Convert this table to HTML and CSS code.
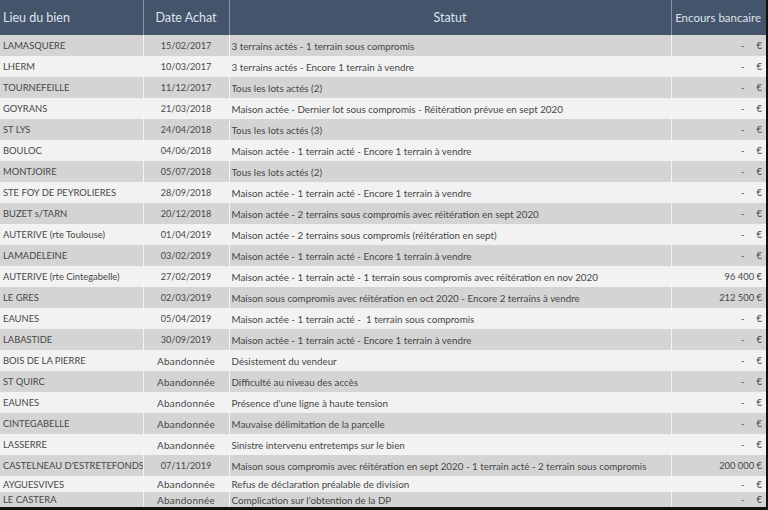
FILE: index.html
```html
<!DOCTYPE html>
<html lang="fr">
<head>
<meta charset="utf-8">
<link rel="stylesheet" href="styles.css">
</head>
<body>
<div class="frame">
<table class="grid">
<colgroup>
<col class="c-lieu"><col class="c-date"><col class="c-statut"><col class="c-enc">
</colgroup>
<thead>
<tr><th class="lieu">Lieu du bien</th><th class="date">Date Achat</th><th class="statut">Statut</th><th class="enc">Encours bancaire</th></tr>
</thead>
<tbody>
<tr><td class="lieu">LAMASQUERE</td><td class="date">15/02/2017</td><td class="statut">3 terrains actés - 1 terrain sous compromis</td><td class="enc"><span class="dash">-</span><span class="eur">€</span></td></tr>
<tr><td class="lieu">LHERM</td><td class="date">10/03/2017</td><td class="statut">3 terrains actés - Encore 1 terrain à vendre</td><td class="enc"><span class="dash">-</span><span class="eur">€</span></td></tr>
<tr><td class="lieu">TOURNEFEILLE</td><td class="date">11/12/2017</td><td class="statut">Tous les lots actés (2)</td><td class="enc"><span class="dash">-</span><span class="eur">€</span></td></tr>
<tr><td class="lieu">GOYRANS</td><td class="date">21/03/2018</td><td class="statut">Maison actée - Dernier lot sous compromis - Réitération prévue en sept 2020</td><td class="enc"><span class="dash">-</span><span class="eur">€</span></td></tr>
<tr><td class="lieu">ST LYS</td><td class="date">24/04/2018</td><td class="statut">Tous les lots actés (3)</td><td class="enc"><span class="dash">-</span><span class="eur">€</span></td></tr>
<tr><td class="lieu">BOULOC</td><td class="date">04/06/2018</td><td class="statut">Maison actée - 1 terrain acté - Encore 1 terrain à vendre</td><td class="enc"><span class="dash">-</span><span class="eur">€</span></td></tr>
<tr><td class="lieu">MONTJOIRE</td><td class="date">05/07/2018</td><td class="statut">Tous les lots actés (2)</td><td class="enc"><span class="dash">-</span><span class="eur">€</span></td></tr>
<tr><td class="lieu">STE FOY DE PEYROLIERES</td><td class="date">28/09/2018</td><td class="statut">Maison actée - 1 terrain acté - Encore 1 terrain à vendre</td><td class="enc"><span class="dash">-</span><span class="eur">€</span></td></tr>
<tr><td class="lieu">BUZET s/TARN</td><td class="date">20/12/2018</td><td class="statut">Maison actée - 2 terrains sous compromis avec réitération en sept 2020</td><td class="enc"><span class="dash">-</span><span class="eur">€</span></td></tr>
<tr><td class="lieu">AUTERIVE (rte Toulouse)</td><td class="date">01/04/2019</td><td class="statut">Maison actée - 2 terrains sous compromis (réitération en sept)</td><td class="enc"><span class="dash">-</span><span class="eur">€</span></td></tr>
<tr><td class="lieu">LAMADELEINE</td><td class="date">03/02/2019</td><td class="statut">Maison actée - 1 terrain acté - Encore 1 terrain à vendre</td><td class="enc"><span class="dash">-</span><span class="eur">€</span></td></tr>
<tr><td class="lieu">AUTERIVE (rte Cintegabelle)</td><td class="date">27/02/2019</td><td class="statut">Maison actée - 1 terrain acté - 1 terrain sous compromis avec réitération en nov 2020</td><td class="enc">96 400 €</td></tr>
<tr><td class="lieu">LE GRES</td><td class="date">02/03/2019</td><td class="statut">Maison sous compromis avec réitération en oct 2020 - Encore 2 terrains à vendre</td><td class="enc">212 500 €</td></tr>
<tr><td class="lieu">EAUNES</td><td class="date">05/04/2019</td><td class="statut">Maison actée - 1 terrain acté -&nbsp; 1 terrain sous compromis</td><td class="enc"><span class="dash">-</span><span class="eur">€</span></td></tr>
<tr><td class="lieu">LABASTIDE</td><td class="date">30/09/2019</td><td class="statut">Maison actée - 1 terrain acté - Encore 1 terrain à vendre</td><td class="enc"><span class="dash">-</span><span class="eur">€</span></td></tr>
<tr><td class="lieu">BOIS DE LA PIERRE</td><td class="date aband">Abandonnée</td><td class="statut">Désistement du vendeur</td><td class="enc"><span class="dash">-</span><span class="eur">€</span></td></tr>
<tr><td class="lieu">ST QUIRC</td><td class="date aband">Abandonnée</td><td class="statut">Difficulté au niveau des accès</td><td class="enc"><span class="dash">-</span><span class="eur">€</span></td></tr>
<tr><td class="lieu">EAUNES</td><td class="date aband">Abandonnée</td><td class="statut">Présence d'une ligne à haute tension</td><td class="enc"><span class="dash">-</span><span class="eur">€</span></td></tr>
<tr><td class="lieu">CINTEGABELLE</td><td class="date aband">Abandonnée</td><td class="statut">Mauvaise délimitation de la parcelle</td><td class="enc"><span class="dash">-</span><span class="eur">€</span></td></tr>
<tr><td class="lieu">LASSERRE</td><td class="date aband">Abandonnée</td><td class="statut">Sinistre intervenu entretemps sur le bien</td><td class="enc"><span class="dash">-</span><span class="eur">€</span></td></tr>
<tr><td class="lieu">CASTELNEAU D'ESTRETEFONDS</td><td class="date">07/11/2019</td><td class="statut">Maison sous compromis avec réitération en sept 2020 - 1 terrain acté - 2 terrain sous compromis</td><td class="enc">200 000 €</td></tr>
<tr class="short"><td class="lieu">AYGUESVIVES</td><td class="date aband">Abandonnée</td><td class="statut">Refus de déclaration préalable de division</td><td class="enc"><span class="dash">-</span><span class="eur">€</span></td></tr>
<tr class="short last"><td class="lieu">LE CASTERA</td><td class="date aband">Abandonnée</td><td class="statut">Complication sur l'obtention de la DP</td><td class="enc"><span class="dash">-</span><span class="eur">€</span></td></tr>
</tbody>
</table>
</div>
</body>
</html>
```
FILE: styles.css
```css
html, body {
  margin: 0;
  padding: 0;
  background: #ffffff;
}
.frame {
  width: 766px;
  height: 507px;
  border-right: 2px solid #111;
  border-bottom: 3px solid #111;
  overflow: hidden;
  background: #d6d6d6;
}
.grid {
  width: 766px;
  border-collapse: collapse;
  table-layout: fixed;
  font-family: "Lato", "DejaVu Sans", sans-serif;
  font-weight: 400;
  font-size: 10px;
  color: #474747;
}
.c-lieu { width: 143px; }
.c-date { width: 86px; }
.c-statut { width: 442px; }
.c-enc { width: 95px; }
th, td {
  border-left: 1px solid #f4f4f4;
  padding: 0 3px;
  white-space: nowrap;
  overflow: hidden;
}
th:first-child, td:first-child { border-left: none; }
thead tr { height: 35px; }
th {
  background: #44546a;
  color: #dfe3ea;
  font-weight: 400;
  font-size: 12.5px;
  border-left-color: #8995a6;
}
th.lieu { text-align: left; }
th.date, th.statut { text-align: center; }
th.enc { text-align: right; padding-right: 5px; font-size: 11.5px; }
tbody tr { height: 21px; }
tbody tr:nth-child(odd) { background: #d4d4d4; }
tbody tr:nth-child(even) { background: #f2f2f2; }
tbody tr.short { height: 16px; }
tbody tr.last { height: 15px; }
td.lieu { font-size: 9.4px; }
td.date { text-align: center; font-size: 9.1px; }
td.date.aband { font-size: 10px; letter-spacing: 0.2px; }
td.statut { padding-left: 2px; font-size: 9.8px; }
td.enc { text-align: right; padding-right: 4px; font-size: 9.4px; }
.dash { margin-right: 12px; }
```
